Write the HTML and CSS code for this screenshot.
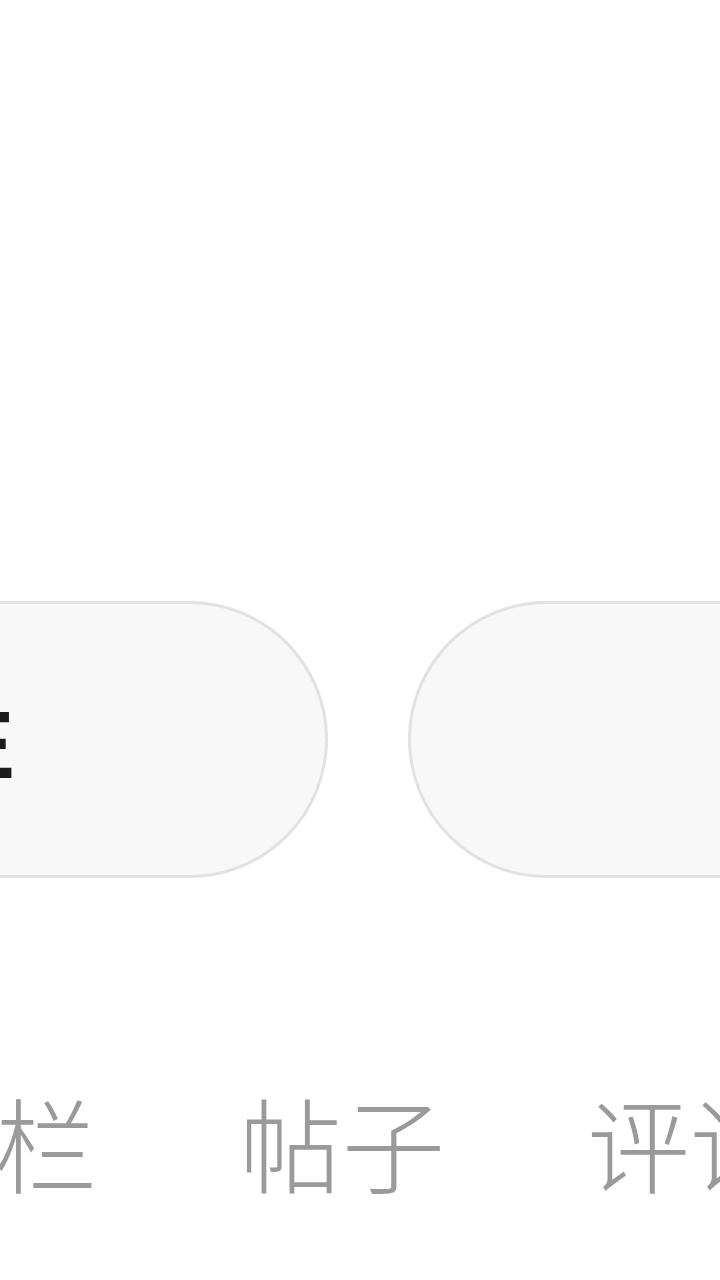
FILE: index.html
```html
<!DOCTYPE html>
<html lang="zh">
<head>
<meta charset="utf-8">
<link rel="stylesheet" href="styles.css">
</head>
<body>
<div class="page">
  <div class="pills">
    <div class="pill"><span class="pill-text">关注</span></div>
    <div class="pill"><span class="pill-text">消息</span></div>
  </div>
  <div class="tabs">
    <div class="tab">专栏</div>
    <div class="tab">帖子</div>
    <div class="tab">评论</div>
  </div>
</div>
</body>
</html>
```
FILE: styles.css
```css
html, body {
  margin: 0;
  padding: 0;
  background: #ffffff;
}
.page {
  width: 720px;
  height: 1280px;
  overflow: hidden;
  padding-top: 601px;
  box-sizing: border-box;
  font-family: "Noto Sans CJK SC", "Noto Sans", sans-serif;
}
.pills {
  display: flex;
  gap: 80px;
  margin-left: -484px;
  width: max-content;
}
.pill {
  width: 812px;
  height: 277px;
  box-sizing: border-box;
  border: 3px solid #e2e2e2;
  border-radius: 140px;
  background: #f8f8f8;
  display: flex;
  align-items: center;
  justify-content: center;
  padding-bottom: 14px;
}
.pill-text {
  font-size: 90px;
  font-weight: 700;
  color: #1c1c1c;
  line-height: 1;
  margin-right: -4px;
}
.tabs {
  display: flex;
  gap: 142px;
  margin-left: -109px;
  margin-top: 204px;
  width: max-content;
}
.tab {
  width: 206px;
  font-size: 103px;
  line-height: 120px;
  color: #9a9a9a;
  font-weight: 300;
  white-space: nowrap;
}
```
